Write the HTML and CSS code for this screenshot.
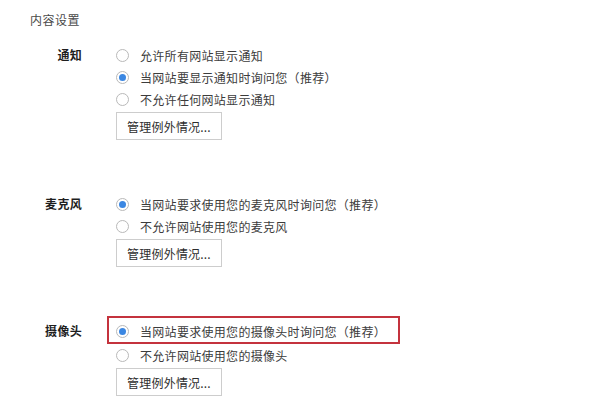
FILE: index.html
```html
<!DOCTYPE html>
<html lang="zh-CN">
<head>
<meta charset="utf-8">
<title>内容设置</title>
<link rel="stylesheet" href="styles.css">
</head>
<body>
<div class="page">
  <div class="title">内容设置</div>

  <div class="section section-first">
    <div class="label">通知</div>
    <div class="options">
      <div class="row"><span class="radio"></span><span class="text">允许所有网站显示通知</span></div>
      <div class="row"><span class="radio checked"></span><span class="text">当网站要显示通知时询问您（推荐）</span></div>
      <div class="row"><span class="radio"></span><span class="text">不允许任何网站显示通知</span></div>
      <button class="btn">管理例外情况...</button>
    </div>
  </div>

  <div class="section">
    <div class="label">麦克风</div>
    <div class="options">
      <div class="row"><span class="radio checked"></span><span class="text">当网站要求使用您的麦克风时询问您（推荐）</span></div>
      <div class="row"><span class="radio"></span><span class="text">不允许网站使用您的麦克风</span></div>
      <button class="btn">管理例外情况...</button>
    </div>
  </div>

  <div class="section">
    <div class="label">摄像头</div>
    <div class="options">
      <div class="row row-marked"><span class="radio checked"></span><span class="text">当网站要求使用您的摄像头时询问您（推荐）</span></div>
      <div class="row"><span class="radio"></span><span class="text">不允许网站使用您的摄像头</span></div>
      <button class="btn">管理例外情况...</button>
    </div>
  </div>
</div>
</body>
</html>
```
FILE: styles.css
```css
html, body {
  margin: 0;
  padding: 0;
  background: #ffffff;
}

body {
  font-family: "Noto Sans CJK SC", "Noto Sans", "Liberation Sans", sans-serif;
  font-size: 12px;
  color: #3c3c3c;
}

.page {
  padding-top: 12px;
  width: 600px;
  height: 408px;
  overflow: hidden;
  box-sizing: border-box;
}

.title {
  margin-left: 30px;
  font-size: 12px;
  line-height: 16px;
  color: #4a4a4a;
  letter-spacing: 0.5px;
}

.section {
  display: grid;
  grid-template-columns: 82px auto;
  column-gap: 34px;
  align-items: start;
  margin-top: 53px;
}

.section-first {
  margin-top: 16px;
}

.label {
  text-align: right;
  font-weight: bold;
  line-height: 22px;
  color: #1e1e1e;
  letter-spacing: 0.3px;
}

.options {
  display: flex;
  flex-direction: column;
  align-items: flex-start;
}

.row {
  display: flex;
  align-items: center;
  height: 22px;
  position: relative;
  letter-spacing: 0.3px;
}

.row-marked {
  margin-bottom: 2px;
}

.row-marked::after {
  content: "";
  position: absolute;
  left: -9px;
  right: -14px;
  top: -4px;
  bottom: -2px;
  border: 2px solid #c4333d;
}

.radio {
  width: 13px;
  height: 13px;
  box-sizing: border-box;
  border: 1px solid #b9b9b9;
  border-radius: 50%;
  background: #fff;
  margin-right: 11px;
  flex: none;
  display: flex;
  align-items: center;
  justify-content: center;
}

.radio.checked::before {
  content: "";
  width: 7px;
  height: 7px;
  border-radius: 50%;
  background: #3b87e2;
}

.text {
  color: #3c3c3c;
  white-space: nowrap;
}

.btn {
  margin-top: 2px;
  width: 106px;
  height: 28px;
  box-sizing: border-box;
  border: 1px solid #cdcdcd;
  background: #fff;
  font-family: inherit;
  font-size: 12px;
  color: #2e2e2e;
  padding: 0;
  letter-spacing: 0.2px;
}
```
